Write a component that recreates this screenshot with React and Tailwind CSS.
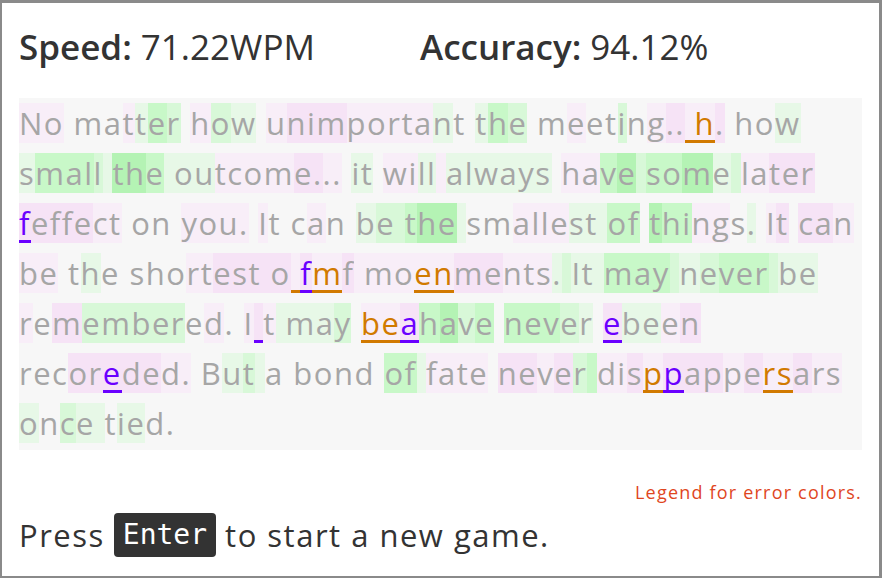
const lines = [
  ["No matter how unimportant the meeting.. h. how", "pp...pgGh.phg.pPPPpppppg..gGh..p..h.pPPooP...g"],
  ["small the outcome... it will always have some later", "gGGGhgHHGgggppppPPpp.gg.ppggpgggggg.ppGHhGGHghppPPP"],
  ["feffect on you. It can be the smallest of things. It can", "vPPPPpp....pppp.p...p..ghhGHHg..ppppgggGG.HGGpp.g.pP.PPp"],
  ["be the shortest o fmf moenments. It may never be", "pp..g.....ppPPPPPovoPpppooPPpppghgggGGGhghGGGhgg"],
  ["remembered. I t may beahave never ebeen", "p.Phhhhh.p..pvpgggh.oovGHhG.GGGhg.vggpP"],
  ["recoreded. But a bond of fate never disppappersars", "...PPvPPpp..ghg.......GGgpppp.PPpPhGppPovPPpPooPpp"],
  ["once tied.", "g.hgg.gg.."],
];

const bg = {
  ".": "",
  p: "bg-[#f8eef8]",
  P: "bg-[#f6e3f6]",
  g: "bg-[#e7f8e7]",
  h: "bg-[#d8f8d8]",
  G: "bg-[#c8f8c8]",
  H: "bg-[#b4f3b4]",
  o: "bg-[#f8eef8] text-[#d17a00] border-b-[3px] border-[#d17a00]",
  v: "bg-[#f6e3f6] text-[#6a00ff] border-b-[3px] border-[#6a00ff]",
};

function Line({ text, codes }) {
  return (
    <div className="flex h-[50px] items-center">
      {text.split("").map((ch, i) => (
        <span
          key={i}
          className={`inline-block h-[40px] whitespace-pre leading-[40px] ${bg[codes[i]] || ""}`}
        >
          {ch}
        </span>
      ))}
    </div>
  );
}

export default function App() {
  return (
    <div className="h-[578px] w-[891px] bg-white font-['Open_Sans',sans-serif]">
      <div className="flex h-[578px] w-[882px] flex-col border-t-[3px] border-r-[3px] border-b-2 border-l-2 border-[#8a8a8a] px-[17px]">
        <div className="flex h-[95px] items-start pt-[20px] text-[35px] leading-[48px] text-[#333333]">
          <div className="w-[401px]">
            <span className="font-semibold">Speed:</span> 71.22WPM
          </div>
          <div>
            <span className="font-semibold">Accuracy:</span> 94.12%
          </div>
        </div>

        <div className="h-[352px] bg-[#f7f7f7] text-[31px] tracking-[1.5px] text-[#a6a6a6]">
          {lines.map(([t, c], i) => (
            <Line key={i} text={t} codes={c} />
          ))}
        </div>

        <div className="mt-[30px] text-right text-[18px] leading-[24px] tracking-[1.2px] text-[#e0461e]">
          Legend for error colors.
        </div>

        <div className="mt-[7px] flex h-[48px] items-center text-[31px] tracking-[1.5px] text-[#333333]">
          <span>Press</span>
          <span className="ml-[9px] mr-[9px] flex h-[44px] items-center rounded-[4px] bg-[#333333] px-[9px] font-['DejaVu_Sans_Mono',monospace] text-[28px] tracking-normal text-white">
            Enter
          </span>
          <span>to start a new game.</span>
        </div>
      </div>
    </div>
  );
}
